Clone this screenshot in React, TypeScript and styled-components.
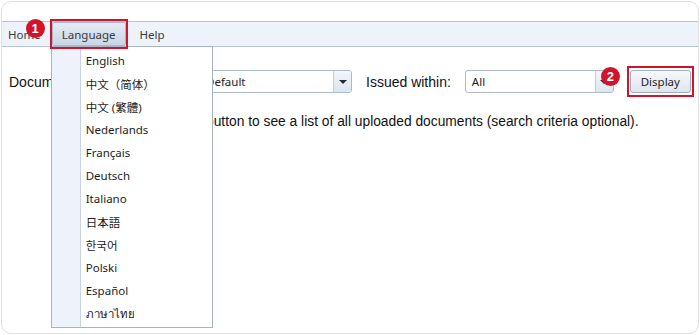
import React from "react";
import styled, { createGlobalStyle } from "styled-components";

const GlobalStyle = createGlobalStyle`
  html, body {
    margin: 0;
    padding: 0;
    background: #ffffff;
  }
  * {
    box-sizing: border-box;
  }
`;

const uiFont = `"Noto Sans", "Noto Sans CJK SC", sans-serif`;

const Frame = styled.div`
  position: relative;
  margin: 1px;
  width: 698px;
  height: 333px;
  border: 1px solid #e0e0e0;
  border-radius: 10px;
  padding-top: 19px;
  overflow: hidden;
  background: #fff;
`;

const MenuBar = styled.div`
  display: flex;
  align-items: stretch;
  height: 26px;
  border-top: 1px solid #b6c4d8;
  border-bottom: 1px solid #b6c4d8;
  background: #eef2fa;
  padding-left: 5px;
`;

const MenuItem = styled.div<{ $active?: boolean; $after?: number }>`
  position: relative;
  display: flex;
  align-items: center;
  padding: 0 ${(p) => (p.$active ? "9px" : "0")};
  margin-right: ${(p) => p.$after ?? 0}px;
  font-family: ${uiFont};
  font-size: 11.5px;
  color: #3a3a3a;
  border: 1px solid ${(p) => (p.$active ? "#a8b8cf" : "transparent")};
  border-radius: 2px;
  background: ${(p) =>
    p.$active ? "linear-gradient(#e4ebf5, #c9d6e7)" : "transparent"};
`;

const HighlightBox = styled.div`
  position: absolute;
  inset: -4px -3px -4px -3px;
  border: 2px solid #d0142c;
  pointer-events: none;
  z-index: 3;
`;

const Badge = styled.div<{ $x: number; $y: number }>`
  position: absolute;
  left: ${(p) => p.$x}px;
  top: ${(p) => p.$y}px;
  width: 19px;
  height: 19px;
  border-radius: 50%;
  background: #d0142c;
  color: #fff;
  font-family: "Liberation Sans", Arial, sans-serif;
  font-weight: bold;
  font-size: 13px;
  display: flex;
  align-items: center;
  justify-content: center;
  z-index: 5;
`;

const Dropdown = styled.div`
  position: absolute;
  left: -2px;
  top: 23px;
  width: 162px;
  padding: 2px 0;
  border: 1px solid #a8b4c6;
  background: linear-gradient(
    to right,
    #eef2fb 28px,
    #c9d3e2 28px,
    #c9d3e2 29px,
    #ffffff 29px
  );
  z-index: 2;
`;

const DropItem = styled.div<{ $lang?: string }>`
  height: 23px;
  display: flex;
  align-items: center;
  padding-left: 34px;
  font-family: ${(p) =>
    p.$lang === "tc"
      ? `"Noto Sans", "Noto Sans CJK TC", sans-serif`
      : p.$lang === "jp"
      ? `"Noto Sans", "Noto Sans CJK JP", sans-serif`
      : p.$lang === "kr"
      ? `"Noto Sans", "Noto Sans CJK KR", sans-serif`
      : uiFont};
  font-size: 11.5px;
  color: #1c1c1c;
  white-space: nowrap;
`;

const Content = styled.div`
  padding: 23px 0 0 7px;
`;

const FilterRow = styled.div`
  display: flex;
  align-items: center;
  height: 23px;
`;

const Label = styled.span<{ $width?: number }>`
  font-family: "Liberation Sans", Arial, sans-serif;
  font-size: 14px;
  color: #111;
  width: ${(p) => (p.$width ? `${p.$width}px` : "auto")};
  margin-right: ${(p) => (p.$width ? "0" : "14px")};
  white-space: nowrap;
`;

const Select = styled.div<{ $width: number; $gap: number }>`
  position: relative;
  display: flex;
  width: ${(p) => p.$width}px;
  height: 23px;
  border: 1px solid #abb9cd;
  border-radius: 3px;
  background: #fff;
  margin-right: ${(p) => p.$gap}px;
`;

const SelectValue = styled.div`
  flex: 1;
  display: flex;
  align-items: center;
  padding-left: 6px;
  font-family: ${uiFont};
  font-size: 11.5px;
  color: #222;
`;

const SelectArrow = styled.div`
  width: 18px;
  border-left: 1px solid #c3cedc;
  background: linear-gradient(#f3f6fa, #dde5ef);
  border-radius: 0 2px 2px 0;
  display: flex;
  align-items: center;
  justify-content: center;
  &::after {
    content: "";
    border-left: 4px solid transparent;
    border-right: 4px solid transparent;
    border-top: 4px solid #1f2a3a;
  }
`;

const ButtonWrap = styled.div`
  position: relative;
`;

const Button = styled.button`
  display: block;
  width: 61px;
  height: 23px;
  padding: 0;
  border: 1px solid #a3adbb;
  border-radius: 3px;
  background: linear-gradient(#f6f8fb, #dfe5ee);
  font-family: ${uiFont};
  font-size: 11.5px;
  color: #1e1e1e;
`;

const Hint = styled.p`
  margin: 21px 0 0 82px;
  font-family: "Liberation Sans", Arial, sans-serif;
  font-size: 13.8px;
  color: #111;
  white-space: nowrap;
`;

const languages: { name: string; lang?: string }[] = [
  { name: "English" },
  { name: "中文（简体）" },
  { name: "中文 (繁體)", lang: "tc" },
  { name: "Nederlands" },
  { name: "Français" },
  { name: "Deutsch" },
  { name: "Italiano" },
  { name: "日本語", lang: "jp" },
  { name: "한국어", lang: "kr" },
  { name: "Polski" },
  { name: "Español" },
  { name: "ภาษาไทย" },
];

const App = (): JSX.Element => {
  return (
    <>
      <GlobalStyle />
      <Frame>
        <MenuBar>
          <MenuItem $after={10}>Home</MenuItem>
          <MenuItem $active $after={13}>
            Language
            <HighlightBox />
            <Badge $x={-27} $y={-4}>
              1
            </Badge>
            <Dropdown>
              {languages.map((l) => (
                <DropItem key={l.name} $lang={l.lang}>
                  {l.name}
                </DropItem>
              ))}
            </Dropdown>
          </MenuItem>
          <MenuItem>Help</MenuItem>
        </MenuBar>
        <Content>
          <FilterRow>
            <Label $width={190}>Document type:</Label>
            <Select $width={153} $gap={14}>
              <SelectValue>Default</SelectValue>
              <SelectArrow />
            </Select>
            <Label>Issued within:</Label>
            <Select $width={149} $gap={16}>
              <SelectValue>All</SelectValue>
              <SelectArrow />
              <Badge $x={135} $y={-4}>
                2
              </Badge>
            </Select>
            <ButtonWrap>
              <Button>Display</Button>
              <HighlightBox />
            </ButtonWrap>
          </FilterRow>
          <Hint>
            Click the “Display” button to see a list of all uploaded documents
            (search criteria optional).
          </Hint>
        </Content>
      </Frame>
    </>
  );
};

export default App;
